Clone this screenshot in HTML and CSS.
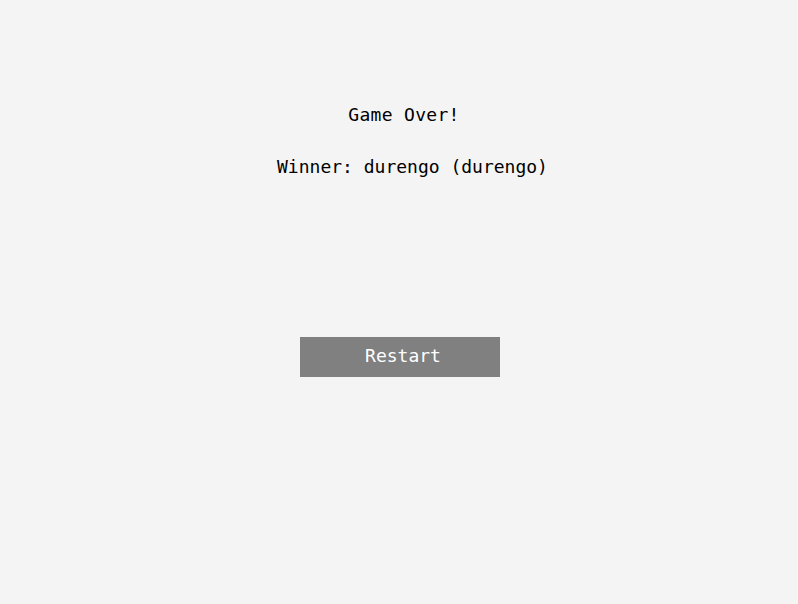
FILE: index.html
```html
<!DOCTYPE html>
<html>
<head>
<meta charset="utf-8">
<link rel="stylesheet" href="styles.css">
</head>
<body>
<main class="screen">
  <h1 class="title">Game Over!</h1>
  <p class="winner">Winner: durengo (durengo)</p>
  <button class="restart">Restart</button>
</main>
</body>
</html>
```
FILE: styles.css
```css
html, body {
  margin: 0;
  padding: 0;
  background: #f4f4f4;
}
.screen {
  height: 604px;
  display: flex;
  flex-direction: column;
  align-items: center;
  padding: 105px 0 0 2px;
  box-sizing: border-box;
  font-family: "DejaVu Sans Mono", monospace;
  color: #000;
}
.title {
  margin: 0;
  font-size: 18px;
  font-weight: normal;
  line-height: 20px;
  padding-left: 8px;
  letter-spacing: 0.3px;
}
.winner {
  margin: 32px 0 0;
  font-size: 18px;
  line-height: 20px;
  padding-left: 25px;
}
.restart {
  margin-top: 160px;
  width: 200px;
  height: 40px;
  border: none;
  background: #808080;
  color: #fff;
  font-family: "DejaVu Sans Mono", monospace;
  font-size: 18px;
  padding: 0 0 3px 6px;
}
```
